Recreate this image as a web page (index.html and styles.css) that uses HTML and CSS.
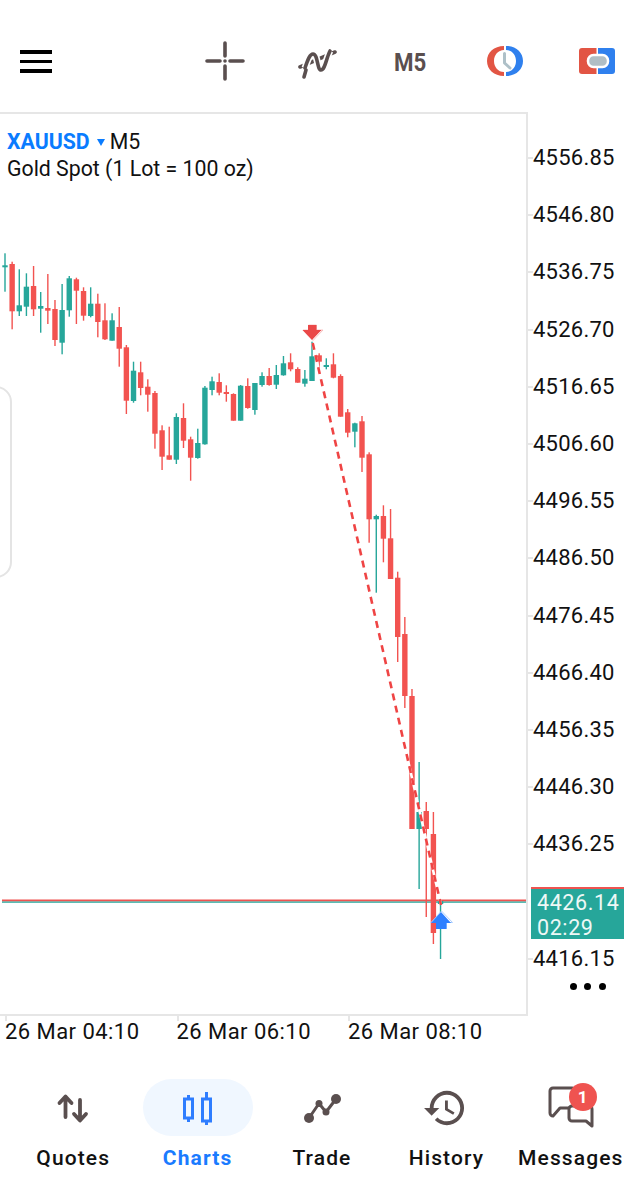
FILE: index.html
```html
<!DOCTYPE html>
<html lang="en">
<head>
<meta charset="utf-8">
<title>XAUUSD M5</title>
<link rel="stylesheet" href="styles.css">
</head>
<body>
<div class="page">
  <header class="toolbar">
    <div class="burger"><span></span><span></span><span></span></div>
    <div class="tools">
      <svg class="tool tool-cross" viewBox="0 0 40 40"><path d="M20 2v13M20 25v13M2 20h13M25 20h13" class="ink" stroke-width="3.600"/><circle cx="20" cy="20" r="1.800" fill="#5a4f4f"/></svg>
      <svg class="tool tool-wave" viewBox="0 0 40 40"><path d="M2 26 37 11" class="ink" stroke-width="3.600"/><path d="M7 27C10 18 12 13 15 13c5 0 4 16 8 16 4 0 5-11 9-19" fill="none" stroke="#fff" stroke-width="7"/><path d="M7 27C10 18 12 13 15 13c5 0 4 16 8 16 4 0 5-11 9-19" class="ink" stroke-width="3.600"/><path d="M6 36l2-7" class="ink" stroke-width="3.600"/></svg>
      <span class="tool-period">M5</span>
      <svg class="tool tool-clock" viewBox="0 0 36 30"><path d="M17 0C7 0 0 6.500 0 15s7 15 17 15v-4C11 26 7 21 7 15S11 4 17 4z" fill="#e25544"/><path d="M19 0c10 0 17 6.500 17 15s-7 15-17 15v-4c6 0 10-5 10-11S25 4 19 4z" fill="#2f80ee"/><path d="M17.500 7.500v9.500l5.500 5" fill="none" stroke="#aec0c8" stroke-width="3" stroke-linecap="round" stroke-linejoin="round"/></svg>
      <svg class="tool tool-wallet" viewBox="0 0 36 26"><path d="M3 0h14.500v26H3a3 3 0 0 1-3-3V3a3 3 0 0 1 3-3z" fill="#e25544"/><path d="M19 0h14a3 3 0 0 1 3 3v20a3 3 0 0 1-3 3H19z" fill="#2f80ee"/><rect x="9" y="7" width="20" height="12" rx="5.500" fill="#b0bec5" stroke="#fff" stroke-width="2.500"/></svg>
    </div>
  </header>

  <main class="chart">
    <section class="plot">
      <svg id="candles" class="plot-svg" viewBox="0 114 526 900">
        <line x1="2" y1="900.500" x2="526" y2="900.500" stroke="#ef5350" stroke-width="2.200"/>
        <line x1="2" y1="902.200" x2="526" y2="902.200" stroke="#26a69a" stroke-width="1.300"/>
      </svg>
      <div class="symbol">
        <div class="symbol-line"><b class="ticker">XAUUSD</b><i class="caret"></i><span>M5</span></div>
        <div>Gold Spot (1 Lot = 100 oz)</div>
      </div>
      <div class="side-panel"></div>
    </section>

    <aside class="price-axis">
      <div class="price">4556.85</div>
      <div class="price">4546.80</div>
      <div class="price">4536.75</div>
      <div class="price">4526.70</div>
      <div class="price">4516.65</div>
      <div class="price">4506.60</div>
      <div class="price">4496.55</div>
      <div class="price">4486.50</div>
      <div class="price">4476.45</div>
      <div class="price">4466.40</div>
      <div class="price">4456.35</div>
      <div class="price">4446.30</div>
      <div class="price">4436.25</div>
      <div class="price price-hidden">4426.20</div>
      <div class="price">4416.15</div>
      <div class="dots"><i></i><i></i><i></i></div>
      <div class="live"><span>4426.14</span><span>02:29</span></div>
    </aside>
  </main>

  <div class="time-axis">
    <span class="time">26 Mar 04:10</span>
    <span class="time">26 Mar 06:10</span>
    <span class="time">26 Mar 08:10</span>
  </div>

  <nav class="nav">
    <div class="nav-item">
      <div class="nav-icon">
        <svg viewBox="0 0 110 57"><path d="M47.500 38V18M41.500 24l6-6.500 6 6.500M62 21v20M56 35l6 6.500 6-6.500" class="ink" stroke-width="3.800"/></svg>
      </div>
      <div class="nav-label">Quotes</div>
    </div>
    <div class="nav-item nav-active">
      <div class="nav-icon nav-pill">
        <svg viewBox="0 0 110 57"><path d="M45.500 16v27M63.500 13v33" stroke="#2e7dff" stroke-width="3" fill="none"/><rect x="41.500" y="20" width="8" height="19" fill="#f0f7ff" stroke="#2e7dff" stroke-width="3"/><rect x="59.500" y="20" width="8" height="22" fill="#f0f7ff" stroke="#2e7dff" stroke-width="3"/></svg>
      </div>
      <div class="nav-label">Charts</div>
    </div>
    <div class="nav-item">
      <div class="nav-icon">
        <svg viewBox="0 0 110 57"><path d="M42 39 52 24.500 59 33 69 20" class="ink" stroke-width="3"/><circle cx="42" cy="39" r="5" fill="#5a4f4f"/><circle cx="52" cy="24.500" r="3.500" fill="#5a4f4f"/><circle cx="59" cy="33" r="3.500" fill="#5a4f4f"/><circle cx="69" cy="20" r="5" fill="#5a4f4f"/></svg>
      </div>
      <div class="nav-label">Trade</div>
    </div>
    <div class="nav-item">
      <div class="nav-icon">
        <svg viewBox="-9 0 42 24" class="icon-history"><path fill="#5a4f4f" d="M13 3a9 9 0 0 0-9 9H1l3.890 3.890.07.14L9 12H6c0-3.870 3.130-7 7-7s7 3.130 7 7-3.130 7-7 7c-1.930 0-3.680-.79-4.940-2.060l-1.420 1.420A8.954 8.954 0 0 0 13 21a9 9 0 0 0 0-18zm-1 5v5l4.280 2.540.72-1.210-3.500-2.080V8H12z"/></svg>
      </div>
      <div class="nav-label">History</div>
    </div>
    <div class="nav-item">
      <div class="nav-icon">
        <svg viewBox="0 0 110 57"><path d="M37 9h19a3 3 0 0 1 3 3v14a3 3 0 0 1-3 3H44l-7 8a3 3 0 0 1-3-3V12a3 3 0 0 1 3-3z" class="ink" stroke-width="3"/><path d="M56 27h17a3 3 0 0 1 3 3v17l-6-5H56a3 3 0 0 1-3-3V30a3 3 0 0 1 3-3z" fill="#fff" stroke="#5a4f4f" stroke-width="3" stroke-linejoin="round"/></svg>
        <span class="badge">1</span>
      </div>
      <div class="nav-label">Messages</div>
    </div>
  </nav>
</div>
<script src="chart.js"></script>
</body>
</html>
```

FILE: styles.css
```css
* { box-sizing: border-box; }
html, body { margin: 0; padding: 0; background: #fff; }
body { font-family: Roboto, "Liberation Sans", sans-serif; color: #111; }
.page { width: 643px; height: 1200px; overflow: hidden; display: flex; flex-direction: column; }

.ink { fill: none; stroke: #5a4f4f; stroke-linecap: round; stroke-linejoin: round; }

.toolbar { height: 112px; padding: 39px 28px 0 20px; display: flex; justify-content: space-between; align-items: flex-start; }
.burger { display: flex; flex-direction: column; gap: 6px; margin-top: 11px; width: 32px; }
.burger span { display: block; height: 3.500px; background: #000; }
.tools { display: flex; align-items: center; height: 44px; }
.tool { display: block; }
.tool-cross { width: 40px; height: 40px; margin-right: 53px; margin-left: -1px; }
.tool-wave { width: 40px; height: 40px; margin-right: 56px; }
.tool-period { font-size: 26.500px; font-weight: 700; color: #5a4f4f; width: 34px; margin-right: 59px; transform: scaleX(0.84); transform-origin: left center; white-space: nowrap; }
.tool-clock { width: 36px; height: 30px; margin-right: 56px; }
.tool-wallet { width: 36px; height: 26px; }

.chart { display: grid; grid-template-columns: 528px 1fr; height: 904px; }
.plot { position: relative; border-top: 2px solid #e6e6e6; border-right: 2px solid #e6e6e6; border-bottom: 2px solid #e6e6e6; overflow: hidden; }
.plot-svg { display: block; width: 526px; height: 900px; }
.symbol { position: absolute; left: 7px; top: 14px; font-size: 21.300px; line-height: 27px; color: #111; }
.symbol-line { display: flex; align-items: center; }
.ticker { font-weight: 700; font-size: 21.300px; color: #0a7cff; }
.caret { width: 0; height: 0; margin: 2px 5px 0 7px; border-left: 4px solid transparent; border-right: 4px solid transparent; border-top: 7px solid #0a7cff; }
.side-panel { position: absolute; left: -20px; top: 272px; width: 32px; height: 192px; background: #fff; border: 2px solid #e4e4e4; border-radius: 24px; }

.price-axis { position: relative; padding-top: 17px; display: flex; flex-direction: column; }
.price { height: 57.200px; line-height: 57.200px; padding-left: 5px; font-size: 22px; letter-spacing: 0.25px; color: #111; position: relative; }
.price::before { content: ""; position: absolute; left: 0; top: 28px; width: 5px; height: 2px; background: #e6e6e6; }
.price-hidden { visibility: hidden; }
.dots { display: flex; gap: 7.500px; margin: -3.500px 0 0 41.500px; }
.dots i { width: 7px; height: 7px; border-radius: 50%; background: #000; }
.live { position: absolute; left: 3px; top: 775px; width: 93px; height: 52px; background: #26a69a; border-top: 2px solid #ef5350; color: #eef8f6; font-size: 21.500px; line-height: 25px; letter-spacing: 0.6px; padding: 1px 0 0 6px; display: flex; flex-direction: column; }

.time-axis { display: flex; padding-left: 5px; height: 31px; align-items: center; }
.time { width: 171.500px; font-size: 22px; letter-spacing: 0.45px; color: #111; position: relative; white-space: nowrap; }
.time::before { content: ""; position: absolute; left: 0; top: -3px; width: 2px; height: 5px; background: #e6e6e6; }

.nav { display: grid; grid-template-columns: repeat(5, 124.400px); padding: 32px 0 0 11px; }
.nav-item { display: flex; flex-direction: column; align-items: center; }
.nav-icon { position: relative; width: 110px; height: 57px; }
.nav-icon svg { display: block; width: 110px; height: 57px; }
.nav-icon .icon-history { width: 80px; height: 46px; margin: 6px 0 0 14px; }
.nav-pill { background: #f0f7ff; border-radius: 29px; }
.nav-label { margin-top: 8px; font-size: 21px; line-height: 28px; font-weight: 500; letter-spacing: 1.100px; color: #111; white-space: nowrap; }
.nav-active .nav-label { color: #1a7bff; font-weight: 700; }
.badge { position: absolute; left: 53px; top: 4px; width: 28px; height: 28px; border-radius: 50%; background: #ef5350; color: #fff; font-size: 17px; font-weight: 700; line-height: 28px; text-align: center; }
```

FILE: chart.js
```js
// [colour, wick high, body top, body bottom, wick low] in page pixels
var R = 'r', G = 'g';
var candles = [
  [G,253.3,265.3,267.3,291.7],[R,261.7,264,311.3,329.3],[G,269.3,305.3,311.3,316],[G,273.3,286.7,306.7,316],
  [R,266,286,309.3,316],[G,292,306,308.7,332.7],[R,274,308,310.7,324],[R,300,309,340,346],
  [G,284,310,342.7,354.3],[G,276,278.3,310.3,316.7],[R,277.7,279.3,290.7,324],[R,287.3,291,315.7,320.7],
  [G,287.3,303.7,316,317.3],[R,293.7,303.7,322,337.3],[R,303.3,320.3,339.3,340],[G,313.3,320.3,340.7,340.7],
  [R,307,327,348.7,366.7],[R,345,347.3,400.7,414],[G,361.7,370.7,401,402.7],[R,361.7,372.3,388,395.3],
  [R,379.3,386.7,394.7,411.7],[R,391,393,433.7,448.7],[R,425.3,430.3,456.7,470],[R,426.7,455.3,459.7,459.7],
  [G,413.3,417,459.7,464],[R,403.3,418,440.7,448],[R,436.7,439.3,457.7,480.7],[G,428.7,443,458,458.7],
  [G,386,387.7,444.3,444.7],[G,376.7,381.3,390,395.3],[R,373.3,382,392.7,395.3],[R,385.3,392,394,401.7],
  [R,393.3,394,420.7,420.7],[G,385,385.7,420.7,420.7],[R,378.3,386,408,408.7],[G,383,383,410,414.7],
  [G,372.3,376,385,386.7],[R,368,376,385,385.7],[G,365,375,384.7,389],[G,356,363.3,375.3,375.7],
  [R,353.3,362.3,369.3,371.3],[R,367.3,369,382.7,382.7],[G,370,378.7,383.7,386.7],[G,341.7,356.3,381,381],
  [R,353.3,355.3,361.7,373.3],[G,358.3,365,367,369.3],[R,353.3,364.3,377.7,378.3],[R,374.3,376,416.7,416.7],
  [R,409,412.3,432.7,437.3],[G,422.7,423.3,431.7,447.3],[R,416,421.3,457.7,472],[R,452.3,454.3,519.3,542.7],
  [G,514.7,516,519.3,592.7],[R,505.3,516,538.7,562.3],[R,509,538.3,579,579],[R,571.7,577.7,637,662],
  [R,617,634,696,708],[R,689,696,829,829],[G,762,812,829,889],[R,802,811,829,917],
  [R,812,834,933,944],[G,900,901,904,959]
];

var NS = 'http://www.w3.org/2000/svg';
var svg = document.getElementById('candles');

function add(tag, attrs) {
  var el = document.createElementNS(NS, tag);
  for (var k in attrs) el.setAttribute(k, attrs[k]);
  svg.appendChild(el);
  return el;
}

candles.forEach(function (c, i) {
  var x = 5 + 7.14 * i;
  var fill = c[0] === R ? '#f25350' : '#26a69a';
  add('rect', { x: x - 0.7, y: c[1], width: 1.4, height: c[4] - c[1], fill: fill });
  add('rect', { x: x - 2.7, y: c[2], width: 5.4, height: Math.max(c[3] - c[2], 2), fill: fill });
});

var line = { x1: 312.7, y1: 343, x2: 441, y2: 905 };
add('line', Object.assign({ stroke: '#fff', 'stroke-width': 2.6 }, line));
add('line', Object.assign({ stroke: '#ef4444', 'stroke-width': 2.6, 'stroke-dasharray': '7 5.4' }, line));

// sell arrow
add('path', { d: 'M303 330h5.500v-5h8v5h6.500l-10 10.500z', fill: '#fff', stroke: '#f7b5b5', 'stroke-width': 0.8 });
add('path', { d: 'M302.500 330h5.500v-5h8.500v5h5l-9.500 10z', fill: '#ea4848' });
// buy arrow
add('path', { d: 'M441.500 911l11 11.500h-6v6h-9.500v-6h-6z', fill: '#fff', stroke: '#9cc4ff', 'stroke-width': 0.8 });
add('path', { d: 'M441 912l10 11h-4.500v6h-10.500v-6h-5z', fill: '#2f80ff' });
```
